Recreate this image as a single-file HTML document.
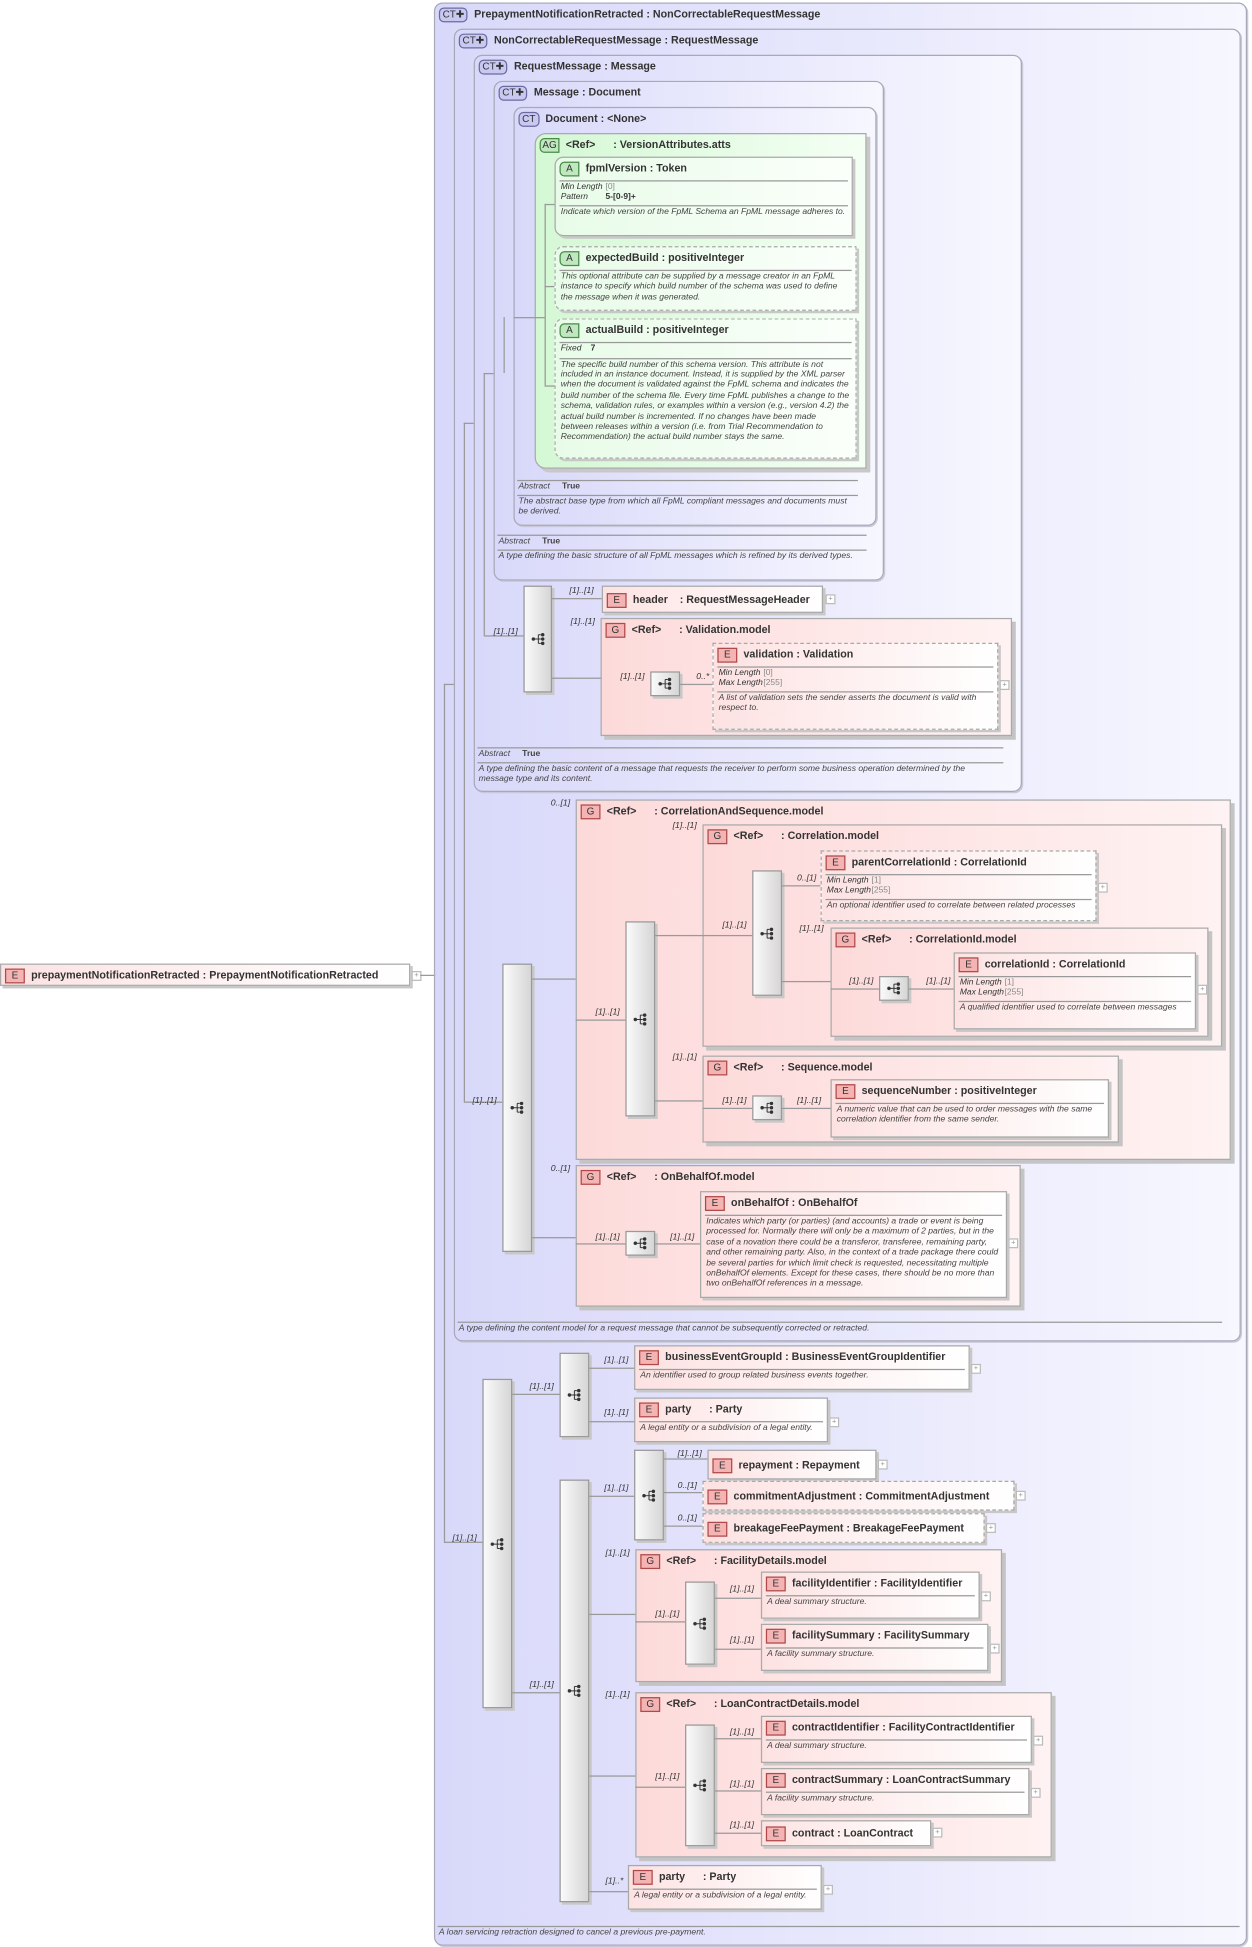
<!DOCTYPE html>
<html><head><meta charset="utf-8"><style>
html,body{margin:0;padding:0;background:#fff;width:1252px;height:1947px;overflow:hidden}
#w{position:absolute;left:0;top:0;width:1007px;height:1566px;transform:scale(1.2433);transform-origin:0 0;font-family:"Liberation Sans",sans-serif;color:#333}
.b{position:absolute;box-sizing:border-box}
.ct{border:1px solid #a8a8b8;border-radius:7px;background:linear-gradient(90deg,#d8d8fa,#f7f7ff);box-shadow:1px 1px 0 #c8c8d8}
.ag{border:1px solid #aaa;border-radius:9px 0 0 9px;background:linear-gradient(90deg,#d4f8d4,#f4fff4);box-shadow:3px 3px 0 #c8c8c8}
.el{border:1px solid #a9a9a9;background:linear-gradient(90deg,#fde2e2,#fff);box-shadow:2px 2px 0 #c8c8c8}
.at{border:1px solid #a9a9a9;background:linear-gradient(90deg,#e8fbe8,#fbfffb);box-shadow:2px 2px 0 #c8c8c8;border-radius:7px 0 0 7px}
.ds{border-style:dashed}
.gr{border:1px solid #aaa;background:linear-gradient(90deg,#fddada,#fff2f2);box-shadow:3px 3px 0 #c4c4c4}
.cm{border:1px solid #999;background:linear-gradient(90deg,#fafafa,#d6d6d6);box-shadow:2px 2px 0 #c8c8c8;display:flex;align-items:center;justify-content:center}
.hd{font-size:8.6px;font-weight:bold;white-space:nowrap;height:16px;line-height:16px;padding-left:3px}
.bd{display:inline-block;width:14px;height:10px;line-height:10px;border:1px solid #b04a4a;background:#f4b4b4;font-size:8px;font-weight:normal;text-align:center;margin-right:5px;vertical-align:middle;color:#333}
.bg{border-color:#4a8a4a;background:#bfe8bf;border-radius:4px 0 0 4px}
.bc{border-color:#6a6aa0;background:#c8c8f0;border-radius:4px;width:auto;padding:0 2px}
.ln{border-top:1px solid #999;margin:2px 3px 0 3px}
.d{font-size:6.9px;font-style:italic;line-height:8.4px;padding:1px 4px;color:#444}
.f{font-size:6.8px;line-height:7.5px;padding:1px 4px;color:#333}
.f i{display:inline-block;width:36px}
.f em{font-style:normal;color:#888}
.lb{position:absolute;font-size:7px;font-style:italic;white-space:nowrap;color:#333}
.h{position:absolute;height:0;border-top:1px solid #999}
.v{position:absolute;width:0;border-left:1px solid #999}
.p{position:absolute;width:6px;height:6px;border:1px solid #bbb;background:#fff;font-size:6px;line-height:6px;text-align:center;color:#999}
.ft{position:absolute;font-size:6.9px;font-style:italic;line-height:8.4px;color:#444}
.fl{position:absolute;height:0;border-top:1px solid #999}
</style></head><body><div id="w">

<!-- root element -->
<div class="b el" style="left:0;top:775px;width:330px;height:18px"><div class="hd" style="height:16px;line-height:16px"><span class="bd">E</span>prepaymentNotificationRetracted : PrepaymentNotificationRetracted</div></div>
<div class="p" style="left:331px;top:781px">+</div>
<div class="h" style="left:338px;top:784px;width:19px"></div>

<!-- outer CT -->
<div class="b ct" style="left:349px;top:2px;width:654px;height:1563px"><div class="hd"><span class="bd bc">CT✚</span>PrepaymentNotificationRetracted : NonCorrectableRequestMessage</div></div>
<div class="fl" style="left:352px;top:1549px;width:645px"></div>
<div class="ft" style="left:353px;top:1551px">A loan servicing retraction designed to cancel a previous pre-payment.</div>

<!-- NonCorrectable -->
<div class="b ct" style="left:365px;top:23px;width:633px;height:1056px"><div class="hd"><span class="bd bc">CT✚</span>NonCorrectableRequestMessage : RequestMessage</div></div>
<div class="fl" style="left:368px;top:1063px;width:615px"></div>
<div class="ft" style="left:369px;top:1065px">A type defining the content model for a request message that cannot be subsequently corrected or retracted.</div>

<!-- RequestMessage -->
<div class="b ct" style="left:381px;top:44px;width:441px;height:593px"><div class="hd"><span class="bd bc">CT✚</span>RequestMessage : Message</div></div>
<div class="fl" style="left:384px;top:601px;width:423px"></div>
<div class="ft" style="left:385px;top:603px"><span style="display:inline-block;width:35px">Abstract</span><b style="font-style:normal">True</b></div>
<div class="fl" style="left:384px;top:613px;width:423px"></div>
<div class="ft" style="left:385px;top:615px;width:420px">A type defining the basic content of a message that requests the receiver to perform some business operation determined by the message type and its content.</div>

<!-- Message -->
<div class="b ct" style="left:397px;top:65px;width:314px;height:402px"><div class="hd"><span class="bd bc">CT✚</span>Message : Document</div></div>
<div class="fl" style="left:400px;top:430px;width:297px"></div>
<div class="ft" style="left:401px;top:432px"><span style="display:inline-block;width:35px">Abstract</span><b style="font-style:normal">True</b></div>
<div class="fl" style="left:400px;top:442px;width:297px"></div>
<div class="ft" style="left:401px;top:444px;width:295px">A type defining the basic structure of all FpML messages which is refined by its derived types.</div>

<!-- Document -->
<div class="b ct" style="left:413px;top:86px;width:292px;height:337px"><div class="hd"><span class="bd bc">CT</span>Document : &lt;None&gt;</div></div>
<div class="fl" style="left:416px;top:386px;width:274px"></div>
<div class="ft" style="left:417px;top:388px"><span style="display:inline-block;width:35px">Abstract</span><b style="font-style:normal">True</b></div>
<div class="fl" style="left:416px;top:398px;width:274px"></div>
<div class="ft" style="left:417px;top:400px;width:272px">The abstract base type from which all FpML compliant messages and documents must be derived.</div>

<!-- AG -->
<div class="b ag" style="left:430px;top:107px;width:267px;height:270px"><div class="hd"><span class="bd bg">AG</span>&lt;Ref&gt;&nbsp;&nbsp;&nbsp;&nbsp;&nbsp; : VersionAttributes.atts</div></div>
<div class="v" style="left:438px;top:164px;height:146px"></div>
<div class="h" style="left:438px;top:164px;width:8px"></div>
<div class="h" style="left:438px;top:230px;width:8px"></div>
<div class="h" style="left:438px;top:310px;width:8px"></div>
<div class="h" style="left:413px;top:255px;width:25px"></div>

<div class="b at" style="left:446px;top:126px;width:240px;height:64px"><div class="hd"><span class="bd bg">A</span>fpmlVersion : Token</div><div class="ln"></div><div class="f"><i>Min Length</i><em>[0]</em><br><i>Pattern</i><b>5-[0-9]+</b></div><div class="ln"></div><div class="d">Indicate which version of the FpML Schema an FpML message adheres to.</div></div>
<div class="b at ds" style="left:446px;top:198px;width:243px;height:52px"><div class="hd"><span class="bd bg">A</span>expectedBuild : positiveInteger</div><div class="ln"></div><div class="d">This optional attribute can be supplied by a message creator in an FpML instance to specify which build number of the schema was used to define the message when it was generated.</div></div>
<div class="b at ds" style="left:446px;top:256px;width:243px;height:113px"><div class="hd"><span class="bd bg">A</span>actualBuild : positiveInteger</div><div class="ln"></div><div class="f" style="font-style:italic"><span style="display:inline-block;width:24px">Fixed</span><b style="font-style:normal">7</b></div><div class="ln"></div><div class="d">The specific build number of this schema version. This attribute is not included in an instance document. Instead, it is supplied by the XML parser when the document is validated against the FpML schema and indicates the build number of the schema file. Every time FpML publishes a change to the schema, validation rules, or examples within a version (e.g., version 4.2) the actual build number is incremented. If no changes have been made between releases within a version (i.e. from Trial Recommendation to Recommendation) the actual build number stays the same.</div></div>

<!-- left connectors -->
<div class="v" style="left:357px;top:550px;height:690px"></div>
<div class="h" style="left:357px;top:550px;width:8px"></div>
<div class="h" style="left:357px;top:1240px;width:31px"></div>
<div class="v" style="left:373px;top:340px;height:546px"></div>
<div class="h" style="left:373px;top:340px;width:8px"></div>
<div class="h" style="left:373px;top:886px;width:31px"></div>
<div class="v" style="left:389px;top:300px;height:211px"></div>
<div class="h" style="left:389px;top:300px;width:8px"></div>
<div class="h" style="left:389px;top:511px;width:32px"></div>
<div class="v" style="left:405px;top:255px;height:45px"></div>

<!-- Request sequence -->
<div class="b cm" style="left:421px;top:471px;width:23px;height:86px"><svg width="12" height="10" viewBox="0 0 12 10"><circle cx="2" cy="5" r="1.4" fill="#333"/><path d="M3 5H6M6 1.5V8.5M6 1.5H8M6 5H8M6 8.5H8" stroke="#333" fill="none" stroke-width=".8"/><circle cx="9.5" cy="1.5" r="1.4" fill="#333"/><circle cx="9.5" cy="5" r="1.4" fill="#333"/><circle cx="9.5" cy="8.5" r="1.4" fill="#333"/></svg></div>
<div class="lb" style="left:397px;top:505px">[1]..[1]</div>
<div class="h" style="left:444px;top:481px;width:40px"></div>
<div class="h" style="left:444px;top:545px;width:79px"></div>
<div class="lb" style="left:458px;top:472px">[1]..[1]</div>
<div class="b el" style="left:484px;top:471px;width:178px;height:22px"><div class="hd" style="height:20px;line-height:20px"><span class="bd">E</span>header&nbsp;&nbsp;&nbsp; : RequestMessageHeader</div></div>
<div class="p" style="left:664px;top:478px">+</div>
<div class="lb" style="left:459px;top:497px">[1]..[1]</div>
<div class="b gr" style="left:483px;top:497px;width:331px;height:95px"><div class="hd"><span class="bd">G</span>&lt;Ref&gt;&nbsp;&nbsp;&nbsp;&nbsp;&nbsp; : Validation.model</div></div>
<div class="b cm" style="left:523px;top:540px;width:24px;height:20px"><svg width="12" height="10" viewBox="0 0 12 10"><circle cx="2" cy="5" r="1.4" fill="#333"/><path d="M3 5H6M6 1.5V8.5M6 1.5H8M6 5H8M6 8.5H8" stroke="#333" fill="none" stroke-width=".8"/><circle cx="9.5" cy="1.5" r="1.4" fill="#333"/><circle cx="9.5" cy="5" r="1.4" fill="#333"/><circle cx="9.5" cy="8.5" r="1.4" fill="#333"/></svg></div>
<div class="lb" style="left:499px;top:541px">[1]..[1]</div>
<div class="lb" style="left:560px;top:541px">0..*</div>
<div class="h" style="left:547px;top:550px;width:26px"></div>
<div class="b el ds" style="left:573px;top:517px;width:230px;height:70px"><div class="hd"><span class="bd">E</span>validation : Validation</div><div class="ln"></div><div class="f" style="font-style:italic"><i>Min Length</i><em>[0]</em><br><i>Max Length</i><em>[255]</em></div><div class="ln"></div><div class="d">A list of validation sets the sender asserts the document is valid with respect to.</div></div>
<div class="p" style="left:804px;top:547px">+</div>

<!-- big choice compositor -->
<div class="b cm" style="left:404px;top:775px;width:24px;height:232px"><svg width="12" height="10" viewBox="0 0 12 10"><circle cx="2" cy="5" r="1.4" fill="#333"/><path d="M3 5H6M6 1.5V8.5M6 1.5H8M6 5H8M6 8.5H8" stroke="#333" fill="none" stroke-width=".8"/><circle cx="9.5" cy="1.5" r="1.4" fill="#333"/><circle cx="9.5" cy="5" r="1.4" fill="#333"/><circle cx="9.5" cy="8.5" r="1.4" fill="#333"/></svg></div>
<div class="lb" style="left:380px;top:882px">[1]..[1]</div>
<div class="h" style="left:428px;top:787px;width:35px"></div>
<div class="h" style="left:428px;top:995px;width:35px"></div>

<!-- CorrelationAndSequence -->
<div class="lb" style="left:443px;top:643px">0..[1]</div>
<div class="b gr ds" style="left:463px;top:643px;width:527px;height:290px"><div class="hd"><span class="bd">G</span>&lt;Ref&gt;&nbsp;&nbsp;&nbsp;&nbsp;&nbsp; : CorrelationAndSequence.model</div></div>
<div class="h" style="left:463px;top:820px;width:40px"></div>
<div class="lb" style="left:479px;top:811px">[1]..[1]</div>
<div class="b cm" style="left:503px;top:741px;width:24px;height:157px"><svg width="12" height="10" viewBox="0 0 12 10"><circle cx="2" cy="5" r="1.4" fill="#333"/><path d="M3 5H6M6 1.5V8.5M6 1.5H8M6 5H8M6 8.5H8" stroke="#333" fill="none" stroke-width=".8"/><circle cx="9.5" cy="1.5" r="1.4" fill="#333"/><circle cx="9.5" cy="5" r="1.4" fill="#333"/><circle cx="9.5" cy="8.5" r="1.4" fill="#333"/></svg></div>
<div class="h" style="left:527px;top:752px;width:38px"></div>
<div class="h" style="left:527px;top:885px;width:38px"></div>

<div class="lb" style="left:541px;top:661px">[1]..[1]</div>
<div class="b gr" style="left:565px;top:663px;width:418px;height:179px"><div class="hd"><span class="bd">G</span>&lt;Ref&gt;&nbsp;&nbsp;&nbsp;&nbsp;&nbsp; : Correlation.model</div></div>
<div class="h" style="left:565px;top:752px;width:40px"></div>
<div class="lb" style="left:581px;top:741px">[1]..[1]</div>
<div class="b cm" style="left:605px;top:700px;width:24px;height:101px"><svg width="12" height="10" viewBox="0 0 12 10"><circle cx="2" cy="5" r="1.4" fill="#333"/><path d="M3 5H6M6 1.5V8.5M6 1.5H8M6 5H8M6 8.5H8" stroke="#333" fill="none" stroke-width=".8"/><circle cx="9.5" cy="1.5" r="1.4" fill="#333"/><circle cx="9.5" cy="5" r="1.4" fill="#333"/><circle cx="9.5" cy="8.5" r="1.4" fill="#333"/></svg></div>
<div class="h" style="left:629px;top:712px;width:31px"></div>
<div class="h" style="left:629px;top:789px;width:39px"></div>
<div class="lb" style="left:641px;top:703px">0..[1]</div>
<div class="b el ds" style="left:660px;top:684px;width:222px;height:57px"><div class="hd"><span class="bd">E</span>parentCorrelationId : CorrelationId</div><div class="ln"></div><div class="f" style="font-style:italic"><i>Min Length</i><em>[1]</em><br><i>Max Length</i><em>[255]</em></div><div class="ln"></div><div class="d">An optional identifier used to correlate between related processes</div></div>
<div class="p" style="left:883px;top:710px">+</div>
<div class="lb" style="left:643px;top:744px">[1]..[1]</div>
<div class="b gr" style="left:668px;top:746px;width:304px;height:88px"><div class="hd"><span class="bd">G</span>&lt;Ref&gt;&nbsp;&nbsp;&nbsp;&nbsp;&nbsp; : CorrelationId.model</div></div>
<div class="h" style="left:668px;top:795px;width:39px"></div>
<div class="lb" style="left:683px;top:786px">[1]..[1]</div>
<div class="b cm" style="left:707px;top:785px;width:24px;height:20px"><svg width="12" height="10" viewBox="0 0 12 10"><circle cx="2" cy="5" r="1.4" fill="#333"/><path d="M3 5H6M6 1.5V8.5M6 1.5H8M6 5H8M6 8.5H8" stroke="#333" fill="none" stroke-width=".8"/><circle cx="9.5" cy="1.5" r="1.4" fill="#333"/><circle cx="9.5" cy="5" r="1.4" fill="#333"/><circle cx="9.5" cy="8.5" r="1.4" fill="#333"/></svg></div>
<div class="lb" style="left:745px;top:786px">[1]..[1]</div>
<div class="h" style="left:731px;top:795px;width:36px"></div>
<div class="b el" style="left:767px;top:766px;width:195px;height:62px"><div class="hd"><span class="bd">E</span>correlationId : CorrelationId</div><div class="ln"></div><div class="f" style="font-style:italic"><i>Min Length</i><em>[1]</em><br><i>Max Length</i><em>[255]</em></div><div class="ln"></div><div class="d">A qualified identifier used to correlate between messages</div></div>
<div class="p" style="left:963px;top:792px">+</div>

<div class="lb" style="left:541px;top:847px">[1]..[1]</div>
<div class="b gr" style="left:565px;top:849px;width:335px;height:70px"><div class="hd"><span class="bd">G</span>&lt;Ref&gt;&nbsp;&nbsp;&nbsp;&nbsp;&nbsp; : Sequence.model</div></div>
<div class="h" style="left:565px;top:891px;width:40px"></div>
<div class="lb" style="left:581px;top:882px">[1]..[1]</div>
<div class="b cm" style="left:605px;top:881px;width:24px;height:20px"><svg width="12" height="10" viewBox="0 0 12 10"><circle cx="2" cy="5" r="1.4" fill="#333"/><path d="M3 5H6M6 1.5V8.5M6 1.5H8M6 5H8M6 8.5H8" stroke="#333" fill="none" stroke-width=".8"/><circle cx="9.5" cy="1.5" r="1.4" fill="#333"/><circle cx="9.5" cy="5" r="1.4" fill="#333"/><circle cx="9.5" cy="8.5" r="1.4" fill="#333"/></svg></div>
<div class="lb" style="left:641px;top:882px">[1]..[1]</div>
<div class="h" style="left:629px;top:891px;width:39px"></div>
<div class="b el" style="left:668px;top:868px;width:224px;height:47px"><div class="hd"><span class="bd">E</span>sequenceNumber : positiveInteger</div><div class="ln"></div><div class="d">A numeric value that can be used to order messages with the same correlation identifier from the same sender.</div></div>

<!-- OnBehalfOf -->
<div class="lb" style="left:443px;top:937px">0..[1]</div>
<div class="b gr ds" style="left:463px;top:937px;width:358px;height:114px"><div class="hd"><span class="bd">G</span>&lt;Ref&gt;&nbsp;&nbsp;&nbsp;&nbsp;&nbsp; : OnBehalfOf.model</div></div>
<div class="h" style="left:463px;top:1000px;width:40px"></div>
<div class="lb" style="left:479px;top:992px">[1]..[1]</div>
<div class="b cm" style="left:503px;top:990px;width:24px;height:20px"><svg width="12" height="10" viewBox="0 0 12 10"><circle cx="2" cy="5" r="1.4" fill="#333"/><path d="M3 5H6M6 1.5V8.5M6 1.5H8M6 5H8M6 8.5H8" stroke="#333" fill="none" stroke-width=".8"/><circle cx="9.5" cy="1.5" r="1.4" fill="#333"/><circle cx="9.5" cy="5" r="1.4" fill="#333"/><circle cx="9.5" cy="8.5" r="1.4" fill="#333"/></svg></div>
<div class="lb" style="left:539px;top:992px">[1]..[1]</div>
<div class="h" style="left:527px;top:1000px;width:36px"></div>
<div class="b el" style="left:563px;top:958px;width:247px;height:86px"><div class="hd"><span class="bd">E</span>onBehalfOf : OnBehalfOf</div><div class="ln"></div><div class="d">Indicates which party (or parties) (and accounts) a trade or event is being processed for. Normally there will only be a maximum of 2 parties, but in the case of a novation there could be a transferor, transferee, remaining party, and other remaining party. Also, in the context of a trade package there could be several parties for which limit check is requested, necessitating multiple onBehalfOf elements. Except for these cases, there should be no more than two onBehalfOf references in a message.</div></div>
<div class="p" style="left:811px;top:996px">+</div>

<!-- bottom sequence -->
<div class="lb" style="left:364px;top:1234px">[1]..[1]</div>
<div class="b cm" style="left:388px;top:1109px;width:24px;height:265px"><svg width="12" height="10" viewBox="0 0 12 10"><circle cx="2" cy="5" r="1.4" fill="#333"/><path d="M3 5H6M6 1.5V8.5M6 1.5H8M6 5H8M6 8.5H8" stroke="#333" fill="none" stroke-width=".8"/><circle cx="9.5" cy="1.5" r="1.4" fill="#333"/><circle cx="9.5" cy="5" r="1.4" fill="#333"/><circle cx="9.5" cy="8.5" r="1.4" fill="#333"/></svg></div>
<div class="h" style="left:412px;top:1121px;width:38px"></div>
<div class="h" style="left:412px;top:1361px;width:38px"></div>
<div class="lb" style="left:426px;top:1112px">[1]..[1]</div>
<div class="lb" style="left:426px;top:1352px">[1]..[1]</div>
<div class="b cm" style="left:450px;top:1088px;width:24px;height:68px"><svg width="12" height="10" viewBox="0 0 12 10"><circle cx="2" cy="5" r="1.4" fill="#333"/><path d="M3 5H6M6 1.5V8.5M6 1.5H8M6 5H8M6 8.5H8" stroke="#333" fill="none" stroke-width=".8"/><circle cx="9.5" cy="1.5" r="1.4" fill="#333"/><circle cx="9.5" cy="5" r="1.4" fill="#333"/><circle cx="9.5" cy="8.5" r="1.4" fill="#333"/></svg></div>
<div class="h" style="left:474px;top:1100px;width:36px"></div>
<div class="h" style="left:474px;top:1143px;width:36px"></div>
<div class="lb" style="left:486px;top:1091px">[1]..[1]</div>
<div class="lb" style="left:486px;top:1133px">[1]..[1]</div>
<div class="b el" style="left:510px;top:1082px;width:270px;height:36px"><div class="hd"><span class="bd">E</span>businessEventGroupId : BusinessEventGroupIdentifier</div><div class="ln"></div><div class="d">An identifier used to group related business events together.</div></div>
<div class="p" style="left:781px;top:1097px">+</div>
<div class="b el" style="left:510px;top:1124px;width:156px;height:36px"><div class="hd"><span class="bd">E</span>party&nbsp;&nbsp;&nbsp;&nbsp;&nbsp; : Party</div><div class="ln"></div><div class="d">A legal entity or a subdivision of a legal entity.</div></div>
<div class="p" style="left:667px;top:1140px">+</div>

<div class="b cm" style="left:450px;top:1190px;width:24px;height:340px"><svg width="12" height="10" viewBox="0 0 12 10"><circle cx="2" cy="5" r="1.4" fill="#333"/><path d="M3 5H6M6 1.5V8.5M6 1.5H8M6 5H8M6 8.5H8" stroke="#333" fill="none" stroke-width=".8"/><circle cx="9.5" cy="1.5" r="1.4" fill="#333"/><circle cx="9.5" cy="5" r="1.4" fill="#333"/><circle cx="9.5" cy="8.5" r="1.4" fill="#333"/></svg></div>
<div class="h" style="left:474px;top:1203px;width:36px"></div>
<div class="h" style="left:474px;top:1298px;width:37px"></div>
<div class="h" style="left:474px;top:1428px;width:37px"></div>
<div class="h" style="left:474px;top:1521px;width:31px"></div>
<div class="lb" style="left:486px;top:1194px">[1]..[1]</div>
<div class="b cm" style="left:510px;top:1166px;width:24px;height:73px"><svg width="12" height="10" viewBox="0 0 12 10"><circle cx="2" cy="5" r="1.4" fill="#333"/><path d="M3 5H6M6 1.5V8.5M6 1.5H8M6 5H8M6 8.5H8" stroke="#333" fill="none" stroke-width=".8"/><circle cx="9.5" cy="1.5" r="1.4" fill="#333"/><circle cx="9.5" cy="5" r="1.4" fill="#333"/><circle cx="9.5" cy="8.5" r="1.4" fill="#333"/></svg></div>
<div class="h" style="left:534px;top:1173px;width:35px"></div>
<div class="h" style="left:534px;top:1200px;width:31px"></div>
<div class="h" style="left:534px;top:1227px;width:31px"></div>
<div class="lb" style="left:545px;top:1166px">[1]..[1]</div>
<div class="lb" style="left:545px;top:1192px">0..[1]</div>
<div class="lb" style="left:545px;top:1218px">0..[1]</div>
<div class="b el" style="left:569px;top:1166px;width:136px;height:24px"><div class="hd" style="height:22px;line-height:22px"><span class="bd">E</span>repayment : Repayment</div></div>
<div class="p" style="left:706px;top:1174px">+</div>
<div class="b el ds" style="left:565px;top:1191px;width:251px;height:24px"><div class="hd" style="height:22px;line-height:22px"><span class="bd">E</span>commitmentAdjustment : CommitmentAdjustment</div></div>
<div class="p" style="left:817px;top:1199px">+</div>
<div class="b el ds" style="left:565px;top:1217px;width:227px;height:24px"><div class="hd" style="height:22px;line-height:22px"><span class="bd">E</span>breakageFeePayment : BreakageFeePayment</div></div>
<div class="p" style="left:793px;top:1225px">+</div>

<div class="lb" style="left:487px;top:1246px">[1]..[1]</div>
<div class="b gr" style="left:511px;top:1246px;width:295px;height:107px"><div class="hd"><span class="bd">G</span>&lt;Ref&gt;&nbsp;&nbsp;&nbsp;&nbsp;&nbsp; : FacilityDetails.model</div></div>
<div class="h" style="left:511px;top:1304px;width:40px"></div>
<div class="lb" style="left:527px;top:1295px">[1]..[1]</div>
<div class="b cm" style="left:551px;top:1272px;width:24px;height:67px"><svg width="12" height="10" viewBox="0 0 12 10"><circle cx="2" cy="5" r="1.4" fill="#333"/><path d="M3 5H6M6 1.5V8.5M6 1.5H8M6 5H8M6 8.5H8" stroke="#333" fill="none" stroke-width=".8"/><circle cx="9.5" cy="1.5" r="1.4" fill="#333"/><circle cx="9.5" cy="5" r="1.4" fill="#333"/><circle cx="9.5" cy="8.5" r="1.4" fill="#333"/></svg></div>
<div class="h" style="left:575px;top:1285px;width:37px"></div>
<div class="h" style="left:575px;top:1326px;width:37px"></div>
<div class="lb" style="left:587px;top:1275px">[1]..[1]</div>
<div class="lb" style="left:587px;top:1316px">[1]..[1]</div>
<div class="b el" style="left:612px;top:1264px;width:176px;height:38px"><div class="hd"><span class="bd">E</span>facilityIdentifier : FacilityIdentifier</div><div class="ln"></div><div class="d">A deal summary structure.</div></div>
<div class="p" style="left:789px;top:1280px">+</div>
<div class="b el" style="left:612px;top:1306px;width:183px;height:38px"><div class="hd"><span class="bd">E</span>facilitySummary : FacilitySummary</div><div class="ln"></div><div class="d">A facility summary structure.</div></div>
<div class="p" style="left:796px;top:1322px">+</div>

<div class="lb" style="left:487px;top:1360px">[1]..[1]</div>
<div class="b gr" style="left:511px;top:1361px;width:335px;height:133px"><div class="hd"><span class="bd">G</span>&lt;Ref&gt;&nbsp;&nbsp;&nbsp;&nbsp;&nbsp; : LoanContractDetails.model</div></div>
<div class="h" style="left:511px;top:1437px;width:40px"></div>
<div class="lb" style="left:527px;top:1426px">[1]..[1]</div>
<div class="b cm" style="left:551px;top:1387px;width:24px;height:98px"><svg width="12" height="10" viewBox="0 0 12 10"><circle cx="2" cy="5" r="1.4" fill="#333"/><path d="M3 5H6M6 1.5V8.5M6 1.5H8M6 5H8M6 8.5H8" stroke="#333" fill="none" stroke-width=".8"/><circle cx="9.5" cy="1.5" r="1.4" fill="#333"/><circle cx="9.5" cy="5" r="1.4" fill="#333"/><circle cx="9.5" cy="8.5" r="1.4" fill="#333"/></svg></div>
<div class="h" style="left:575px;top:1398px;width:37px"></div>
<div class="h" style="left:575px;top:1440px;width:37px"></div>
<div class="h" style="left:575px;top:1474px;width:37px"></div>
<div class="lb" style="left:587px;top:1390px">[1]..[1]</div>
<div class="lb" style="left:587px;top:1432px">[1]..[1]</div>
<div class="lb" style="left:587px;top:1465px">[1]..[1]</div>
<div class="b el" style="left:612px;top:1380px;width:218px;height:38px"><div class="hd"><span class="bd">E</span>contractIdentifier : FacilityContractIdentifier</div><div class="ln"></div><div class="d">A deal summary structure.</div></div>
<div class="p" style="left:831px;top:1396px">+</div>
<div class="b el" style="left:612px;top:1422px;width:216px;height:38px"><div class="hd"><span class="bd">E</span>contractSummary : LoanContractSummary</div><div class="ln"></div><div class="d">A facility summary structure.</div></div>
<div class="p" style="left:829px;top:1438px">+</div>
<div class="b el" style="left:612px;top:1464px;width:137px;height:21px"><div class="hd" style="height:19px;line-height:19px"><span class="bd">E</span>contract : LoanContract</div></div>
<div class="p" style="left:750px;top:1470px">+</div>

<div class="lb" style="left:487px;top:1510px">[1]..*</div>
<div class="b el" style="left:505px;top:1500px;width:156px;height:36px"><div class="hd"><span class="bd">E</span>party&nbsp;&nbsp;&nbsp;&nbsp;&nbsp; : Party</div><div class="ln"></div><div class="d">A legal entity or a subdivision of a legal entity.</div></div>
<div class="p" style="left:662px;top:1516px">+</div>

</div></body></html>
